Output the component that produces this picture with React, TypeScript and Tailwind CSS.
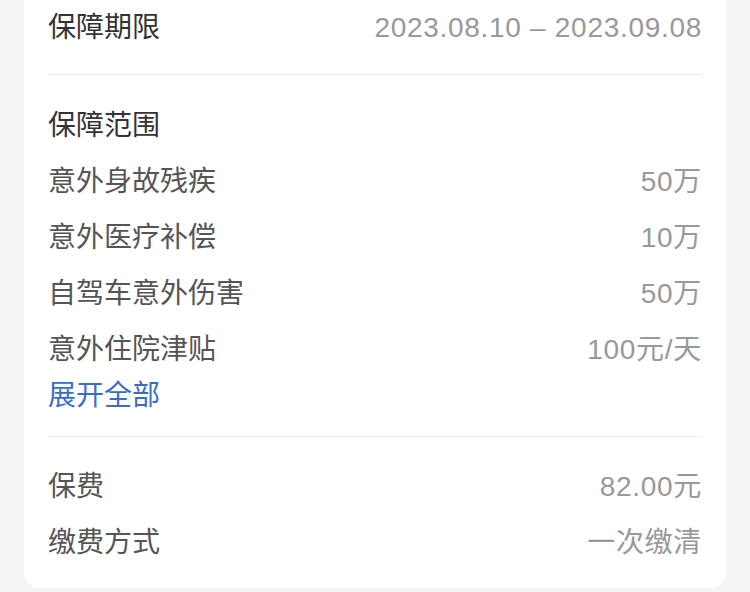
import React from 'react'

const COVERAGE = [
  { label: '意外身故残疾', value: '50万' },
  { label: '意外医疗补偿', value: '10万' },
  { label: '自驾车意外伤害', value: '50万' },
  { label: '意外住院津贴', value: '100元/天' },
]

const FEES = [
  { label: '保费', value: '82.00元' },
  { label: '缴费方式', value: '一次缴清' },
]

const Row: React.FC<{ label: string; value: string; dark?: boolean }> = ({ label, value, dark }) => (
  <div className="flex items-center justify-between h-[56px] pt-[3px]">
    <span className={dark ? 'text-[#333333]' : 'text-[#555555]'}>{label}</span>
    <span className="text-[#999999] tracking-[0.7px]">{value}</span>
  </div>
)

export default function App() {
  return (
    <div
      className="w-[750px] h-[592px] overflow-hidden bg-[#f5f5f5] px-[24px]"
      style={{ fontFamily: '"Liberation Sans", "Noto Sans CJK SC", sans-serif' }}
    >
      <div className="bg-white rounded-b-[16px] px-[24px] text-[28px] mt-[-2px]">
        <div className="pb-[20px]">
          <Row label="保障期限" value="2023.08.10 – 2023.09.08" dark />
        </div>
        <div className="h-px bg-[#eeeeee]" />

        <div className="pt-[21px] pb-[24px]">
          <div className="flex items-center h-[56px] pt-[3px] text-[#333333]">保障范围</div>
          {COVERAGE.map((item) => (
            <Row key={item.label} label={item.label} value={item.value} />
          ))}
          <div className="flex items-center h-[36px] pt-[3px] text-[#3b6cc4]">展开全部</div>
        </div>
        <div className="h-px bg-[#eeeeee]" />

        <div className="pt-[20px] pb-[19px]">
          {FEES.map((item) => (
            <Row key={item.label} label={item.label} value={item.value} />
          ))}
        </div>
      </div>
    </div>
  )
}
